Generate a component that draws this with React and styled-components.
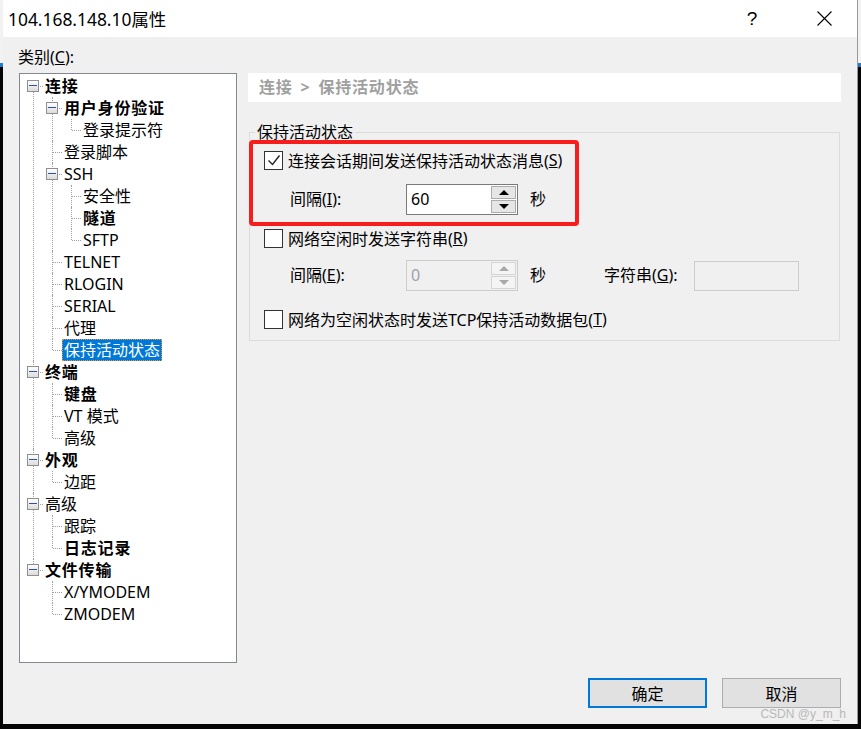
import React from "react"
import styled, { createGlobalStyle } from "styled-components"

const GlobalStyle = createGlobalStyle`
  html, body {
    margin: 0;
    padding: 0;
  }
  body {
    width: 861px;
    height: 729px;
    overflow: hidden;
    background: linear-gradient(#f2f2f2 0 63px, #1f7bd2 63px 67px, #050505 67px);
    font-family: "Noto Sans", "Noto Sans CJK SC", sans-serif;
    font-size: 16px;
    color: #000;
  }
`

const tree = [
  {
    label: "连接",
    bold: true,
    children: [
      { label: "用户身份验证", bold: true, children: [{ label: "登录提示符" }] },
      { label: "登录脚本" },
      {
        label: "SSH",
        children: [{ label: "安全性" }, { label: "隧道", bold: true }, { label: "SFTP" }],
      },
      { label: "TELNET" },
      { label: "RLOGIN" },
      { label: "SERIAL" },
      { label: "代理" },
      { label: "保持活动状态", selected: true },
    ],
  },
  {
    label: "终端",
    bold: true,
    children: [{ label: "键盘", bold: true }, { label: "VT 模式" }, { label: "高级" }],
  },
  { label: "外观", bold: true, children: [{ label: "边距" }] },
  { label: "高级", children: [{ label: "跟踪" }, { label: "日志记录", bold: true }] },
  {
    label: "文件传输",
    bold: true,
    children: [{ label: "X/YMODEM" }, { label: "ZMODEM" }],
  },
]

const TreeNode = ({ node, level, first, last }) => (
  <Item $level={level} $first={first} $last={last}>
    <Row $level={level}>
      <Connector $level={level} />
      {node.children && <Expander $level={level} />}
      <NodeLabel $bold={node.bold} $selected={node.selected}>
        {node.label}
      </NodeLabel>
    </Row>
    {node.children && (
      <List>
        {node.children.map((child, i) => (
          <TreeNode
            key={child.label + i}
            node={child}
            level={level + 1}
            first={false}
            last={i === node.children.length - 1}
          />
        ))}
      </List>
    )}
  </Item>
)

const Key = ({ children }) => <u>{children}</u>

const App = () => {
  return (
    <>
      <GlobalStyle />
      <Window>
        <TitleBar>
          <Title>104.168.148.10属性</Title>
          <HelpButton>?</HelpButton>
          <CloseButton>
            <svg width="15" height="15" viewBox="0 0 15 15">
              <path d="M0.5 0.5 L14.5 14.5 M14.5 0.5 L0.5 14.5" stroke="#000" strokeWidth="1.1" />
            </svg>
          </CloseButton>
        </TitleBar>
        <Body>
          <CategoryLabel>
            类别(<Key>C</Key>):
          </CategoryLabel>
          <Main>
            <TreeBox>
              {tree.map((node, i) => (
                <TreeNode
                  key={node.label + i}
                  node={node}
                  level={0}
                  first={i === 0}
                  last={i === tree.length - 1}
                />
              ))}
            </TreeBox>
            <RightPane>
              <Header>连接 &gt; 保持活动状态</Header>
              <Group>
                <Legend>保持活动状态</Legend>
                <CheckRow $top={6}>
                  <CheckBox>
                    <svg width="17" height="17" viewBox="0 0 17 17">
                      <path d="M3.5 8.5 L7.5 12.5 L14.5 3.5" fill="none" stroke="#222" strokeWidth="1.4" />
                    </svg>
                  </CheckBox>
                  连接会话期间发送保持活动状态消息(<Key>S</Key>)
                </CheckRow>
                <FieldRow $top={13}>
                  <FieldLabel $width={116}>
                    间隔(<Key>I</Key>):
                  </FieldLabel>
                  <SpinBox>
                    <SpinValue>60</SpinValue>
                    <SpinButtons>
                      <SpinButton>
                        <Arrow $up />
                      </SpinButton>
                      <SpinButton>
                        <Arrow />
                      </SpinButton>
                    </SpinButtons>
                  </SpinBox>
                  <Unit>秒</Unit>
                </FieldRow>
                <CheckRow $top={12}>
                  <CheckBox />
                  网络空闲时发送字符串(<Key>R</Key>)
                </CheckRow>
                <FieldRow $top={11}>
                  <FieldLabel $width={116}>
                    间隔(<Key>E</Key>):
                  </FieldLabel>
                  <SpinBox $disabled>
                    <SpinValue $disabled>0</SpinValue>
                    <SpinButtons>
                      <SpinButton $disabled>
                        <Arrow $up $disabled />
                      </SpinButton>
                      <SpinButton $disabled>
                        <Arrow $disabled />
                      </SpinButton>
                    </SpinButtons>
                  </SpinBox>
                  <Unit $width={74}>秒</Unit>
                  <FieldLabel $width={90}>
                    字符串(<Key>G</Key>):
                  </FieldLabel>
                  <TextBox />
                </FieldRow>
                <CheckRow $top={17}>
                  <CheckBox />
                  网络为空闲状态时发送TCP保持活动数据包(<Key>T</Key>)
                </CheckRow>
              </Group>
              <Highlight />
            </RightPane>
          </Main>
          <ButtonRow>
            <DialogButton $default>确定</DialogButton>
            <DialogButton>取消</DialogButton>
          </ButtonRow>
        </Body>
        <Watermark>CSDN @y_m_h</Watermark>
      </Window>
    </>
  )
}

export default App

const Window = styled.div`
  position: relative;
  margin-left: 3px;
  width: 855px;
  height: 724px;
  box-sizing: border-box;
  border-right: 1px solid #9a9a9a;
  display: flex;
  flex-direction: column;
  background: #f0f0f0;
`

const TitleBar = styled.div`
  height: 37px;
  flex-shrink: 0;
  display: flex;
  align-items: center;
  background: #fff;
`

const Title = styled.div`
  flex: 1;
  padding-left: 5px;
  font-size: 17.4px;
  line-height: 24px;
`

const HelpButton = styled.div`
  width: 78px;
  text-align: center;
  font-family: "Liberation Sans", sans-serif;
  font-size: 19px;
  line-height: 24px;
`

const CloseButton = styled.div`
  width: 66px;
  height: 37px;
  display: flex;
  align-items: center;
  justify-content: center;
`

const Body = styled.div`
  flex: 1;
  display: flex;
  flex-direction: column;
  padding: 9px 16px 16px 16px;
`

const CategoryLabel = styled.div`
  line-height: 22px;
  margin: 0 0 5px -1px;
`

const Main = styled.div`
  display: flex;
  gap: 11px;
  height: 590px;
`

const TreeBox = styled.ul`
  width: 218px;
  box-sizing: border-box;
  margin: 0;
  padding: 1px 0 0 0;
  list-style: none;
  background: #fff;
  border: 1px solid #828790;
  overflow: hidden;
`

const List = styled.ul`
  margin: 0;
  padding: 0;
  list-style: none;
`

const Item = styled.li`
  position: relative;

  &::before {
    content: "";
    position: absolute;
    left: ${(p) => 13 + 19 * p.$level}px;
    top: ${(p) => (p.$first ? 11 : 0)}px;
    ${(p) => (p.$last ? "height: 11px;" : "bottom: 0;")}
    border-left: 1px dotted #a0a0a0;
  }
`

const Row = styled.div`
  position: relative;
  height: 22px;
  display: flex;
  align-items: center;
  padding-left: ${(p) => 23 + 19 * p.$level}px;
`

const Connector = styled.span`
  position: absolute;
  left: ${(p) => 14 + 19 * p.$level}px;
  top: 11px;
  width: 9px;
  border-top: 1px dotted #a0a0a0;
`

const Expander = styled.span`
  position: absolute;
  left: ${(p) => 7 + 19 * p.$level}px;
  top: 5px;
  width: 12px;
  height: 12px;
  box-sizing: border-box;
  border: 1px solid #8f8f8f;
  background: linear-gradient(#ffffff, #dcdcdc);
  z-index: 1;

  &::after {
    content: "";
    position: absolute;
    left: 1px;
    right: 1px;
    top: 4px;
    height: 1px;
    background: #2f52a0;
  }
`

const NodeLabel = styled.span`
  padding: 0 2px;
  height: 22px;
  line-height: 22px;
  white-space: nowrap;
  font-weight: ${(p) => (p.$bold ? 700 : 400)};
  letter-spacing: ${(p) => (p.$bold ? "0.8px" : "0")};
  color: ${(p) => (p.$selected ? "#fff" : "#000")};
  background: ${(p) => (p.$selected ? "#0078d7" : "transparent")};
  outline: ${(p) => (p.$selected ? "1px dotted #e39a3a" : "none")};
  outline-offset: -1px;
`

const RightPane = styled.div`
  position: relative;
  flex: 1;
  display: flex;
  flex-direction: column;
`

const Header = styled.div`
  height: 29px;
  line-height: 29px;
  padding-left: 11px;
  background: #fff;
  color: #a0a0a0;
  font-weight: 700;
  letter-spacing: 0.8px;
  word-spacing: 3px;
`

const Group = styled.fieldset`
  margin: 19px 1px 0 1px;
  padding: 0 0 10px 14px;
  border: 1px solid #dcdcdc;
  display: flex;
  flex-direction: column;
`

const Legend = styled.legend`
  margin-left: -9px;
  padding: 0 2px;
  line-height: 22px;
`

const CheckRow = styled.div`
  display: flex;
  align-items: center;
  height: 22px;
  margin-top: ${(p) => p.$top}px;
  white-space: nowrap;
`

const CheckBox = styled.span`
  width: 19px;
  height: 19px;
  box-sizing: border-box;
  margin-right: 5px;
  border: 1px solid #333;
  background: #fff;
  display: flex;
  align-items: center;
  justify-content: center;
`

const FieldRow = styled.div`
  display: flex;
  align-items: center;
  height: 31px;
  margin-top: ${(p) => p.$top}px;
  padding-left: 26px;
  white-space: nowrap;
`

const FieldLabel = styled.span`
  width: ${(p) => p.$width}px;
  margin-top: -3px;
`

const Unit = styled.span`
  width: ${(p) => p.$width || 40}px;
  margin-left: 12px;
  margin-top: -3px;
`

const SpinBox = styled.div`
  width: 112px;
  height: 31px;
  box-sizing: border-box;
  display: flex;
  border: 1px solid ${(p) => (p.$disabled ? "#cccccc" : "#7a7a7a")};
  background: ${(p) => (p.$disabled ? "#f0f0f0" : "#fff")};
`

const SpinValue = styled.span`
  flex: 1;
  padding-left: 4px;
  line-height: 29px;
  color: ${(p) => (p.$disabled ? "#9aa2ac" : "#000")};
`

const SpinButtons = styled.div`
  width: 25px;
  display: flex;
  flex-direction: column;
  gap: 1px;
  padding: 1px 1px 1px 0;
`

const SpinButton = styled.div`
  flex: 1;
  box-sizing: border-box;
  border: 1px solid ${(p) => (p.$disabled ? "#d5d5d5" : "#acacac")};
  background: ${(p) => (p.$disabled ? "#f4f4f4" : "#e6e6e6")};
  display: flex;
  align-items: center;
  justify-content: center;
`

const Arrow = styled.span`
  width: 0;
  height: 0;
  border-left: 5px solid transparent;
  border-right: 5px solid transparent;
  ${(p) => (p.$up ? "border-bottom" : "border-top")}: 5px solid
    ${(p) => (p.$disabled ? "#a8a8a8" : "#000")};
`

const TextBox = styled.div`
  width: 105px;
  height: 30px;
  box-sizing: border-box;
  border: 1px solid #cccccc;
  background: #f0f0f0;
`

const Highlight = styled.div`
  position: absolute;
  left: 1px;
  top: 67px;
  width: 330px;
  height: 86px;
  box-sizing: border-box;
  border: 4px solid #f71d1d;
  border-radius: 4px;
  pointer-events: none;
`

const ButtonRow = styled.div`
  display: flex;
  justify-content: flex-end;
  gap: 15px;
  margin-top: 15px;
`

const DialogButton = styled.div`
  width: 119px;
  height: 30px;
  box-sizing: border-box;
  display: flex;
  align-items: center;
  justify-content: center;
  background: #e1e1e1;
  border: ${(p) => (p.$default ? "2px solid #0078d7" : "1px solid #adadad")};
`

const Watermark = styled.div`
  position: absolute;
  right: 11px;
  bottom: 3px;
  font-family: "Liberation Sans", sans-serif;
  font-size: 12px;
  color: #b8b8b8;
`
